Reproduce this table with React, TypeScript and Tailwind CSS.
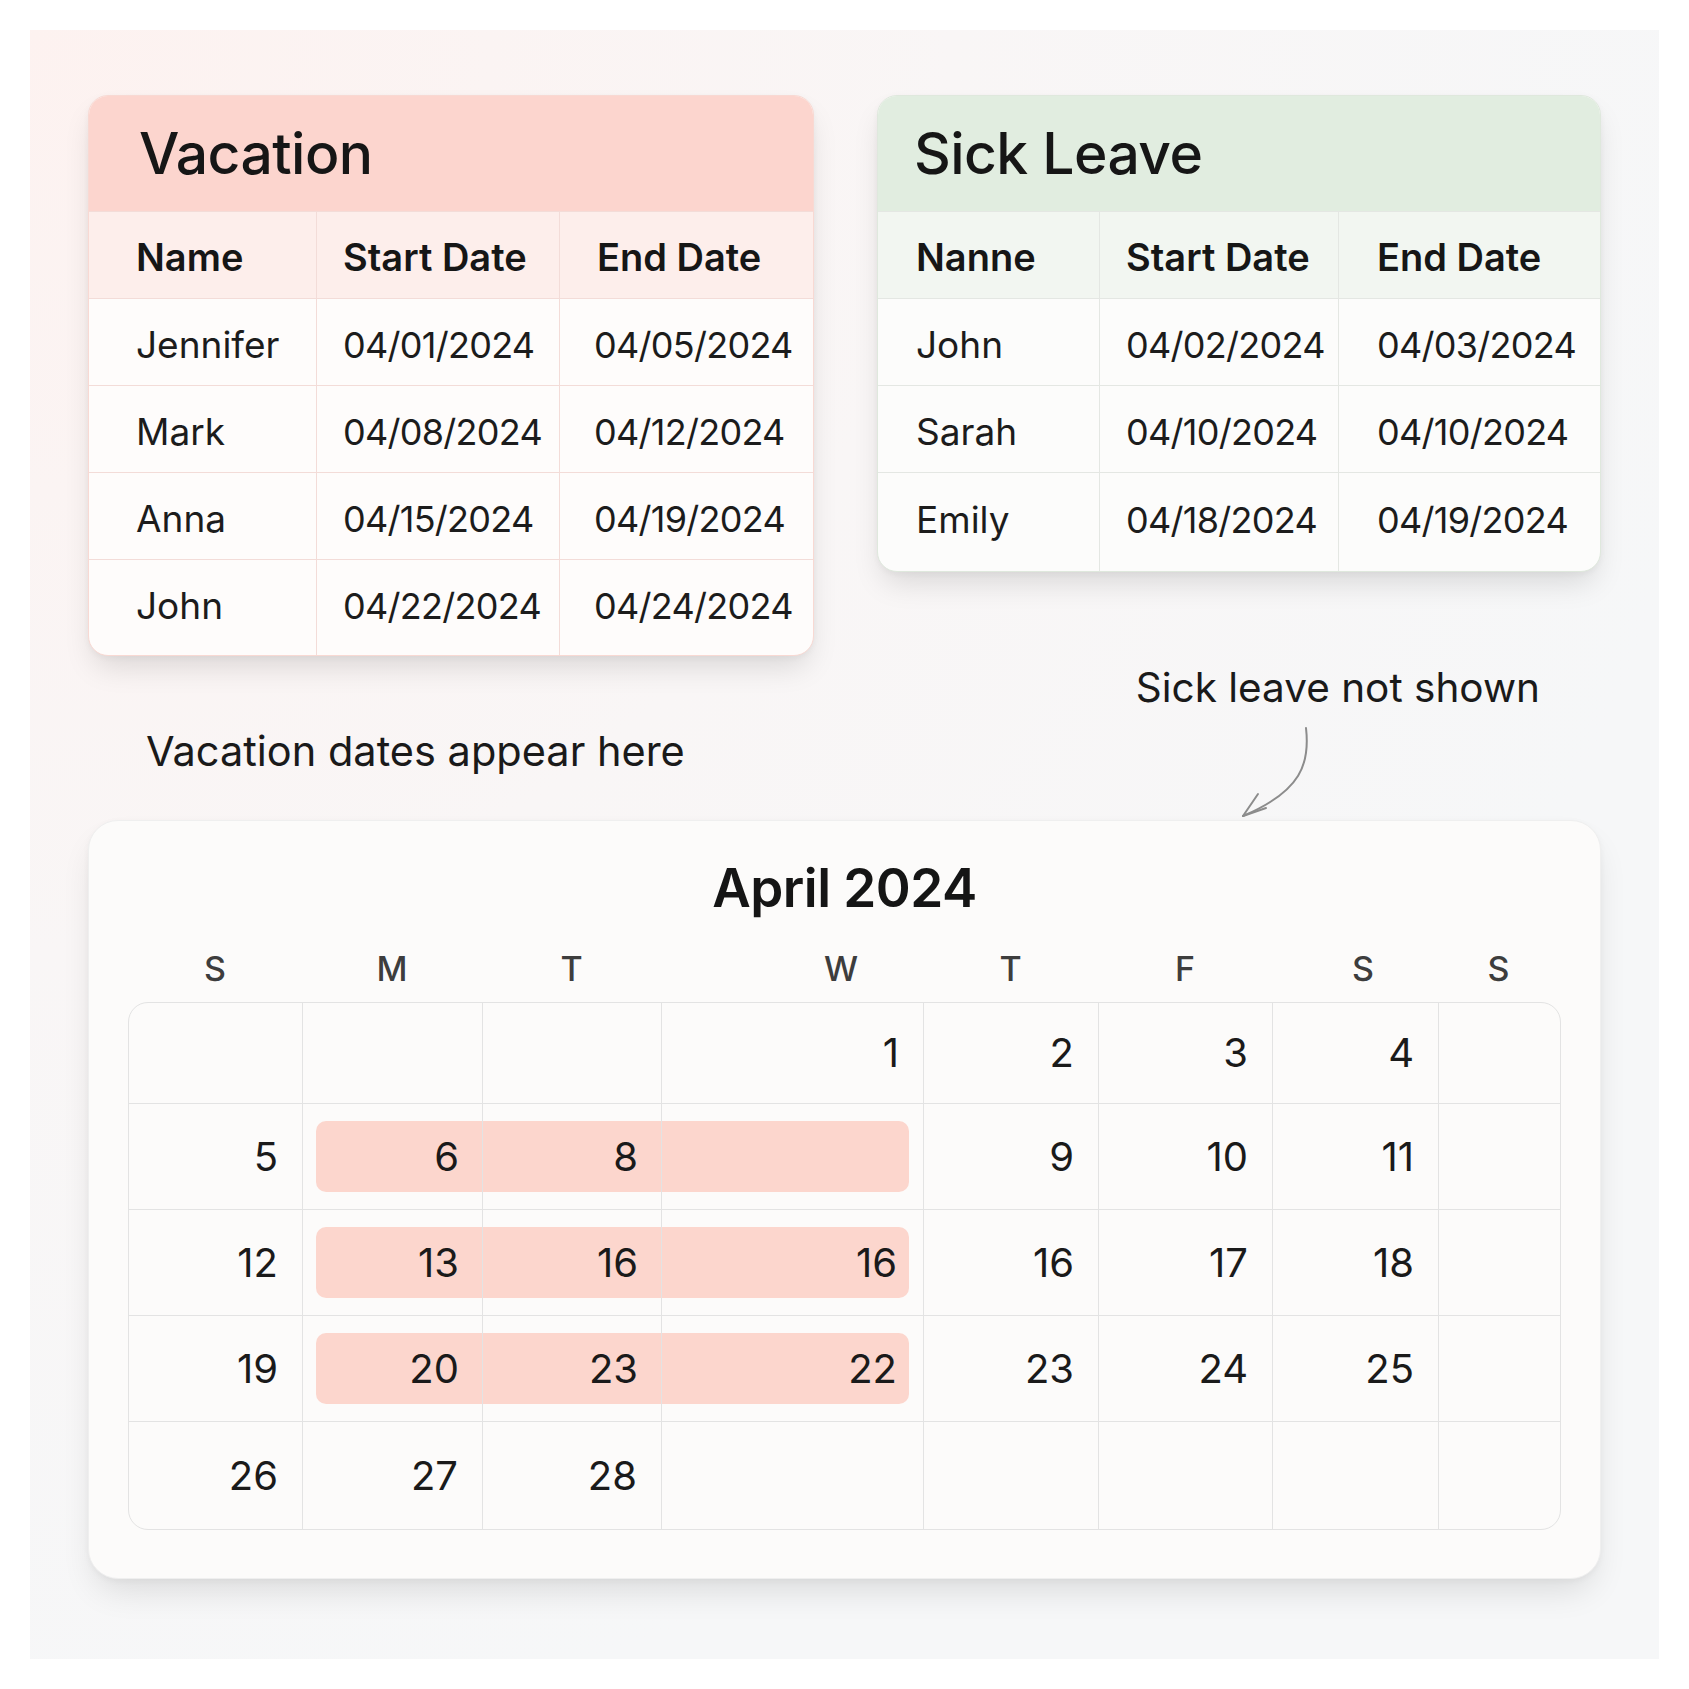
import React from 'react';

interface LeaveRow {
  name: string;
  start: string;
  end: string;
}

const vacation: LeaveRow[] = [
  { name: 'Jennifer', start: '04/01/2024', end: '04/05/2024' },
  { name: 'Mark', start: '04/08/2024', end: '04/12/2024' },
  { name: 'Anna', start: '04/15/2024', end: '04/19/2024' },
  { name: 'John', start: '04/22/2024', end: '04/24/2024' },
];

const sickLeave: LeaveRow[] = [
  { name: 'John', start: '04/02/2024', end: '04/03/2024' },
  { name: 'Sarah', start: '04/10/2024', end: '04/10/2024' },
  { name: 'Emily', start: '04/18/2024', end: '04/19/2024' },
];

const weekdays = ['S', 'M', 'T', 'W', 'T', 'F', 'S', 'S'];

const weeks: (number | null)[][] = [
  [null, null, null, 1, 2, 3, 4, null],
  [5, 6, 8, null, 9, 10, 11, null],
  [12, 13, 16, 16, 16, 17, 18, null],
  [19, 20, 23, 22, 23, 24, 25, null],
  [26, 27, 28, null, null, null, null, null],
];

function LeaveTable({
  title,
  rows,
  nameLabel,
  tone,
}: {
  title: string;
  rows: LeaveRow[];
  nameLabel: string;
  tone: 'pink' | 'green';
}) {
  const pink = tone === 'pink';
  const cols = pink ? 'grid-cols-[228px_243px_256px]' : 'grid-cols-[222px_239px_264px]';
  const line = pink ? 'border-[#f3dcd8]' : 'border-[#e4e7e3]';
  const namePad = pink ? 'pl-[47px]' : 'pl-[38px]';
  const endPad = pink ? 'pl-[34px]' : 'pl-[38px]';
  const headEndPad = pink ? 'pl-[37px]' : 'pl-[38px]';

  return (
    <div
      className={`overflow-hidden rounded-[20px] border shadow-[0_16px_30px_-6px_rgba(0,0,0,0.13),0_2px_6px_rgba(0,0,0,0.04)] ${
        pink ? 'w-[729px] border-[#f8d9d3] bg-[#fefcfb]' : 'w-[727px] border-[#dfe8dd] bg-[#fcfcfb]'
      }`}
    >
      <div
        className={`flex h-[115px] items-center text-[57px] font-medium tracking-[-0.01em] text-[#161616] ${
          pink ? 'bg-[#fcd5ce] pl-[50px]' : 'bg-[#e1ede0] pl-[36px]'
        }`}
      >
        {title}
      </div>
      <div className={`grid h-[88px] border-y ${cols} ${line} ${pink ? 'bg-[#fdeeeb]' : 'bg-[#f2f6f1]'}`}>
        <div className={`flex items-center border-r pt-[5px] ${line} ${namePad} text-[38px] font-semibold text-[#161616]`}>
          {nameLabel}
        </div>
        <div className={`flex items-center border-r pl-[26px] pt-[5px] ${line} text-[38px] font-semibold text-[#161616]`}>
          Start Date
        </div>
        <div className={`flex items-center pt-[5px] ${headEndPad} text-[38px] font-semibold text-[#161616]`}>End Date</div>
      </div>
      {rows.map((r, i) => {
        const last = i === rows.length - 1;
        const size = last ? (pink ? 'h-[95px]' : 'h-[98px]') : `h-[87px] border-b ${line}`;
        const shift = last ? (pink ? 'pb-[3px]' : 'pb-[4px]') : 'pt-[5px]';
        return (
          <div key={r.name + i} className={`grid ${cols} ${size}`}>
            <div className={`flex items-center border-r ${shift} ${line} ${namePad} text-[37px] text-[#1c1c1c]`}>
              {r.name}
            </div>
            <div
              className={`flex items-center border-r pl-[26px] ${shift} ${line} text-[36px] tracking-[-0.02em] text-[#1c1c1c]`}
            >
              {r.start}
            </div>
            <div className={`flex items-center ${shift} ${endPad} text-[36px] tracking-[-0.02em] text-[#1c1c1c]`}>
              {r.end}
            </div>
          </div>
        );
      })}
    </div>
  );
}

function DayCell({ day, row, col }: { day: number | null; row: number; col: number }) {
  const lastCol = col === 7;
  const lastRow = row === weeks.length - 1;
  const highlighted = row >= 1 && row <= 3 && col >= 1 && col <= 3;
  const borders = `${lastCol ? '' : 'border-r'} ${lastRow ? '' : 'border-b'} border-[#e3e3e3]`;

  if (highlighted) {
    const shape =
      col === 1
        ? 'ml-[13px] rounded-l-[10px] pr-[23px]'
        : col === 3
          ? 'mr-[14px] rounded-r-[10px] pr-[12px]'
          : 'pr-[23px]';
    return (
      <div className={`flex items-center ${borders}`}>
        <div className={`flex h-[71px] flex-1 items-center justify-end bg-[#fcd6cd] ${shape}`}>{day ?? ''}</div>
      </div>
    );
  }

  return <div className={`flex items-center justify-end pr-[24px] ${borders}`}>{day ?? ''}</div>;
}

export default function App() {
  return (
    <div className="min-h-screen bg-white font-['Inter','Liberation_Sans',sans-serif]">
      <div className="m-[30px] h-[1629px] w-[1629px] bg-[radial-gradient(ellipse_at_top_left,#fdf2f0_0%,#f9f6f6_40%,#f6f7f8_75%)] px-[58px] pt-[65px]">
        <div className="flex items-start gap-[63px]">
          <LeaveTable title="Vacation" rows={vacation} nameLabel="Name" tone="pink" />
          <LeaveTable title="Sick Leave" rows={sickLeave} nameLabel="Nanne" tone="green" />
        </div>

        <div className="flex h-[164px] items-start justify-between">
          <p className="ml-[58px] mt-[71px] text-[41.5px] leading-[48px] text-[#1a1a1a]">Vacation dates appear here</p>
          <div className="mr-[61px] mt-[8px] flex flex-col">
            <p className="text-[40.5px] leading-[48px] text-[#1a1a1a]">Sick leave not shown</p>
            <svg className="ml-[100px] mt-[11px]" width="80" height="97" viewBox="0 0 80 97" fill="none">
              <path d="M70 5 C74 40 66 68 7 93" stroke="#8c8c8c" strokeWidth="2" strokeLinecap="round" />
              <path d="M22 71 L7 93 L30 85" stroke="#8c8c8c" strokeWidth="2" strokeLinecap="round" strokeLinejoin="round" />
            </svg>
          </div>
        </div>

        <div className="rounded-[30px] border border-[#efefef] bg-[#fcfbfa] px-[39px] pb-[48px] pt-[35px] shadow-[0_18px_34px_-8px_rgba(0,0,0,0.12),0_2px_6px_rgba(0,0,0,0.04)]">
          <h2 className="h-[64px] text-center text-[53px] font-semibold leading-[64px] tracking-[-0.01em] text-[#151515]">
            April 2024
          </h2>
          <div className="mt-[29px] grid h-[40px] grid-cols-[174px_180px_179px_262px_175px_174px_166px_121px] text-[34px] font-medium leading-[40px] text-[#3d3d3d]">
            {weekdays.map((d, i) => (
              <div key={i} className={`text-center ${i === 3 ? 'pl-[98px]' : ''} ${i === 6 ? 'pl-[16px]' : ''}`}>
                {d}
              </div>
            ))}
          </div>
          <div className="mt-[13px] grid grid-cols-[174px_180px_179px_262px_175px_174px_166px_121px] grid-rows-[101px_106px_106px_106px_107px] overflow-hidden rounded-[20px] border border-[#e3e3e3] text-[40px] text-[#1a1a1a]">
            {weeks.map((week, r) => week.map((day, c) => <DayCell key={`${r}-${c}`} day={day} row={r} col={c} />))}
          </div>
        </div>
      </div>
    </div>
  );
}
